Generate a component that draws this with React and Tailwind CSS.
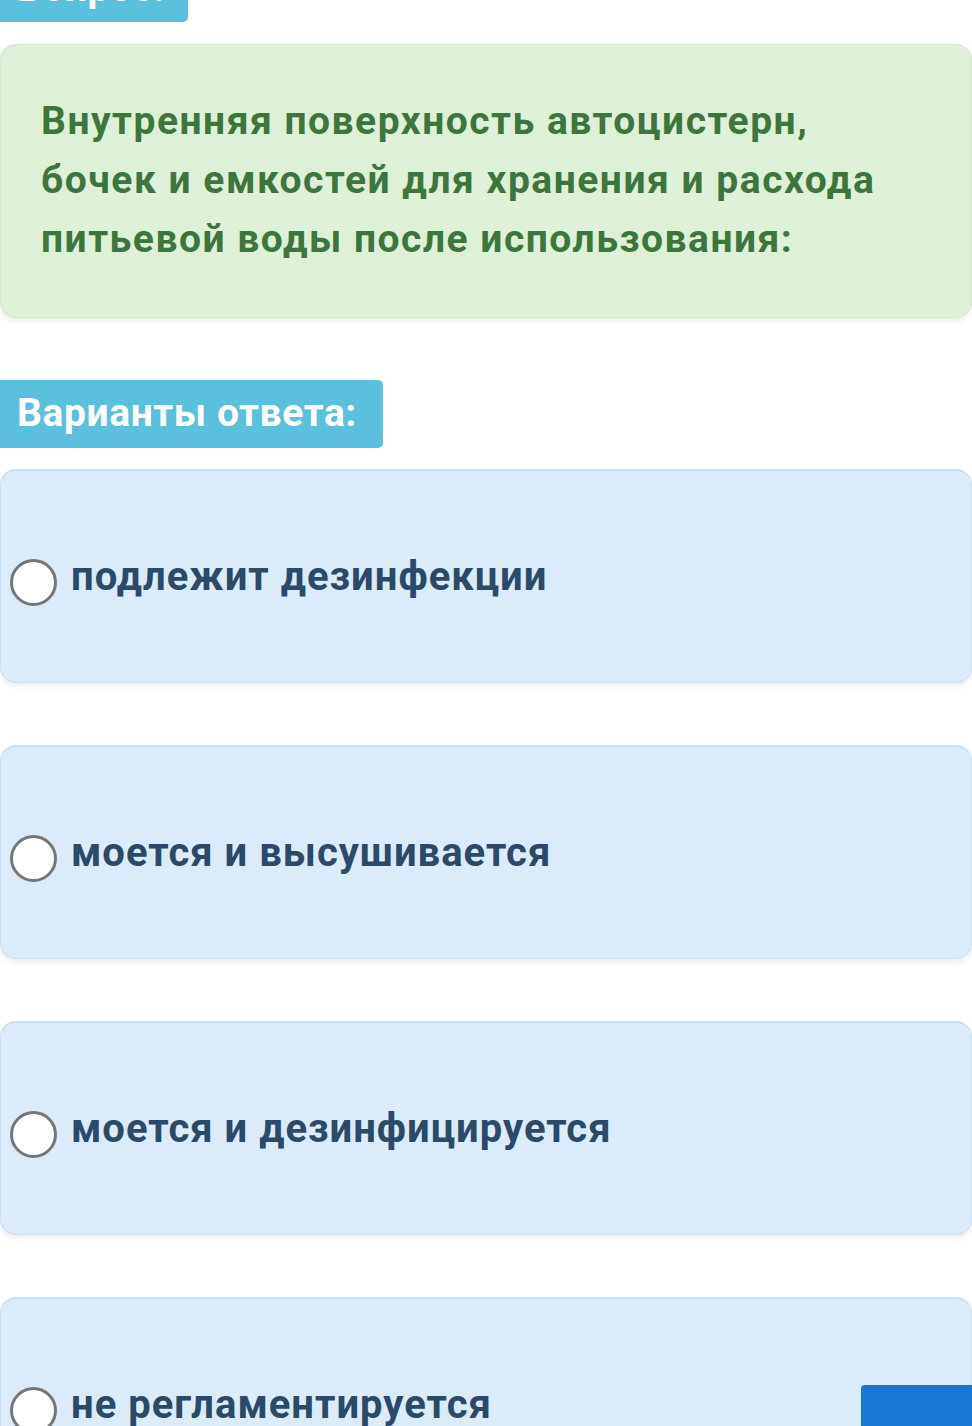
const answers = [
  'подлежит дезинфекции',
  'моется и высушивается',
  'моется и дезинфицируется',
  'не регламентируется',
];

function Radio() {
  return (
    <span className="shrink-0 mt-[12px] w-[47px] h-[47px] rounded-full border-[3px] border-[#777] bg-white" />
  );
}

export default function App() {
  return (
    <div className="relative w-[972px] h-[1426px] overflow-hidden bg-white font-['Roboto',sans-serif] font-bold">
      <div className="-mt-[46px] w-[188px] h-[68px] rounded-r-[5px] bg-[#5bc0de] pl-[17px] pt-[6px] text-[39px] tracking-[0.5px] leading-[56px] text-white">
        Вопрос:
      </div>

      <div className="mt-[22px] w-[972px] h-[274px] rounded-[16px] border border-[#d3e6c9] bg-[#dff0d8] shadow-[0_3px_6px_rgba(0,0,0,0.08)] flex items-center pl-[40px] text-[39px] tracking-[1.5px] leading-[59px] text-[#3c763d]">
        <p className="-mt-[2px] max-w-[860px]">
          Внутренняя поверхность автоцистерн, бочек и емкостей для хранения и расхода питьевой воды после использования:
        </p>
      </div>

      <div className="mt-[62px] w-[383px] h-[68px] rounded-r-[5px] bg-[#5bc0de] pl-[17px] text-[39px] tracking-[0.6px] leading-[66px] text-white">
        Варианты ответа:
      </div>

      <div className="mt-[21px] flex flex-col gap-[62px]">
        {answers.map((a) => (
          <div
            key={a}
            className="w-[972px] h-[214px] shrink-0 rounded-[16px] border border-t-2 border-[#c9dff3] bg-[#dcebf9] shadow-[0_3px_6px_rgba(0,0,0,0.08)] flex items-center pl-[9px] gap-[14px]"
          >
            <Radio />
            <span className="text-[40px] tracking-[1px] leading-[48px] text-[#2b4a6a]">{a}</span>
          </div>
        ))}
      </div>

      <div className="absolute left-[861px] top-[1385px] w-[130px] h-[60px] rounded-[4px] bg-[#1976d2]" />
    </div>
  );
}
